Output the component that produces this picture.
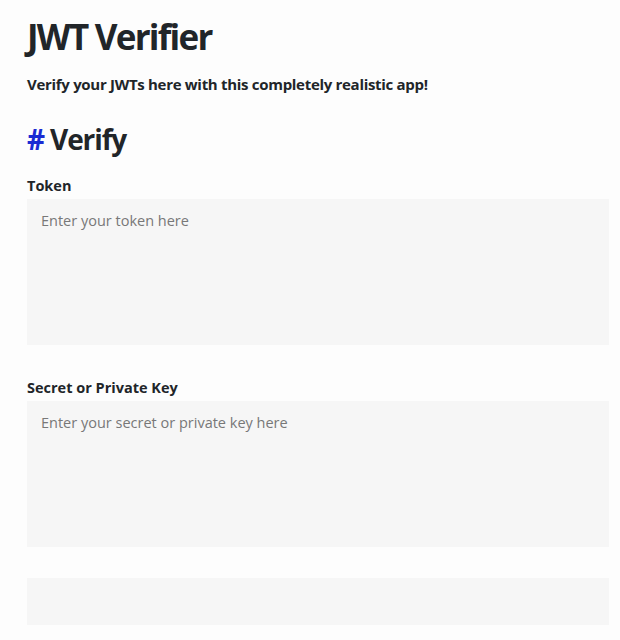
export default function App() {
  return (
    <div className="min-h-screen bg-[#fdfdfd] px-[27px] pt-[16px] text-[#212529] font-['Open_Sans',sans-serif]">
      {/* Header */}
      <h1 className="h-[42px] text-[35px] font-bold leading-[42px] tracking-[-0.05em]">JWT Verifier</h1>
      <p className="mt-[15px] h-[22px] text-[15px] font-bold leading-[22px] tracking-[-0.02em]">
        Verify your JWTs here with this completely realistic app!
      </p>

      {/* Verify section */}
      <h2 className="mt-[27px] h-[35px] text-[28px] font-bold leading-[35px] tracking-[-0.04em]">
        <span className="text-[#1b2bd3]">#</span> Verify
      </h2>

      <div className="mt-[18px] w-[582px]">
        <label className="block h-[21px] text-[14.5px] font-bold leading-[21px]">Token</label>
        <textarea
          placeholder="Enter your token here"
          className="mt-[3px] block h-[146px] w-full resize-none bg-[#f6f6f6] px-[14px] py-[11px] text-[14.5px] leading-[1.5] placeholder:text-[#787878] focus:outline-none"
        />

        <label className="mt-[32px] block h-[21px] text-[14.5px] font-bold leading-[21px]">Secret or Private Key</label>
        <textarea
          placeholder="Enter your secret or private key here"
          className="mt-[3px] block h-[146px] w-full resize-none bg-[#f6f6f6] px-[14px] py-[11px] text-[14.5px] leading-[1.5] placeholder:text-[#787878] focus:outline-none"
        />

        <div className="mt-[31px] h-[47px] bg-[#f6f6f6]" />
      </div>
    </div>
  );
}
